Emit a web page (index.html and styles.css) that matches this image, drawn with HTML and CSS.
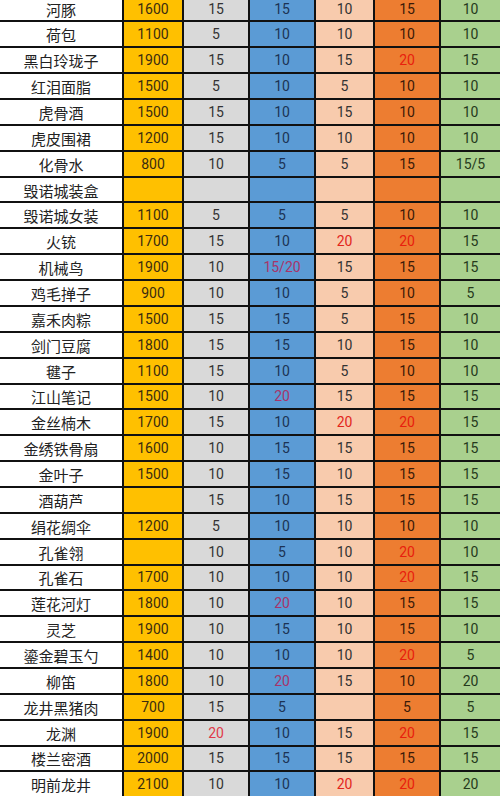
FILE: index.html
```html
<!DOCTYPE html>
<html lang="zh">
<head>
<meta charset="utf-8">
<link rel="stylesheet" href="styles.css">
</head>
<body>
<div class="sheet">
<div class="row"><div>河豚</div><div>1600</div><div>15</div><div>15</div><div>10</div><div>15</div><div>10</div></div>
<div class="row"><div>荷包</div><div>1100</div><div>5</div><div>10</div><div>10</div><div>10</div><div>10</div></div>
<div class="row"><div>黑白玲珑子</div><div>1900</div><div>15</div><div>10</div><div>15</div><div class="r">20</div><div>15</div></div>
<div class="row"><div>红泪面脂</div><div>1500</div><div>5</div><div>10</div><div>5</div><div>10</div><div>10</div></div>
<div class="row"><div>虎骨酒</div><div>1500</div><div>15</div><div>10</div><div>15</div><div>10</div><div>10</div></div>
<div class="row"><div>虎皮围裙</div><div>1200</div><div>15</div><div>10</div><div>10</div><div>10</div><div>10</div></div>
<div class="row"><div>化骨水</div><div>800</div><div>10</div><div>5</div><div>5</div><div>15</div><div>15/5</div></div>
<div class="row"><div>毁诺城装盒</div><div></div><div></div><div></div><div></div><div></div><div></div></div>
<div class="row"><div>毁诺城女装</div><div>1100</div><div>5</div><div>5</div><div>5</div><div>10</div><div>10</div></div>
<div class="row"><div>火铳</div><div>1700</div><div>15</div><div>10</div><div class="r">20</div><div class="r">20</div><div>15</div></div>
<div class="row"><div>机械鸟</div><div>1900</div><div>10</div><div class="r">15/20</div><div>15</div><div>15</div><div>15</div></div>
<div class="row"><div>鸡毛掸子</div><div>900</div><div>10</div><div>10</div><div>5</div><div>10</div><div>5</div></div>
<div class="row"><div>嘉禾肉粽</div><div>1500</div><div>15</div><div>15</div><div>5</div><div>15</div><div>10</div></div>
<div class="row"><div>剑门豆腐</div><div>1800</div><div>15</div><div>15</div><div>10</div><div>15</div><div>10</div></div>
<div class="row"><div>毽子</div><div>1100</div><div>15</div><div>10</div><div>5</div><div>10</div><div>10</div></div>
<div class="row"><div>江山笔记</div><div>1500</div><div>10</div><div class="r">20</div><div>15</div><div>15</div><div>15</div></div>
<div class="row"><div>金丝楠木</div><div>1700</div><div>15</div><div>10</div><div class="r">20</div><div class="r">20</div><div>15</div></div>
<div class="row"><div>金绣铁骨扇</div><div>1600</div><div>10</div><div>15</div><div>15</div><div>15</div><div>15</div></div>
<div class="row"><div>金叶子</div><div>1500</div><div>10</div><div>15</div><div>10</div><div>15</div><div>15</div></div>
<div class="row"><div>酒葫芦</div><div></div><div>15</div><div>10</div><div>15</div><div>15</div><div>15</div></div>
<div class="row"><div>绢花绸伞</div><div>1200</div><div>5</div><div>10</div><div>10</div><div>10</div><div>10</div></div>
<div class="row"><div>孔雀翎</div><div></div><div>10</div><div>5</div><div>10</div><div class="r">20</div><div>10</div></div>
<div class="row"><div>孔雀石</div><div>1700</div><div>10</div><div>10</div><div>10</div><div class="r">20</div><div>15</div></div>
<div class="row"><div>莲花河灯</div><div>1800</div><div>10</div><div class="r">20</div><div>10</div><div>15</div><div>15</div></div>
<div class="row"><div>灵芝</div><div>1900</div><div>10</div><div>15</div><div>10</div><div>15</div><div>10</div></div>
<div class="row"><div>鎏金碧玉勺</div><div>1400</div><div>10</div><div>10</div><div>10</div><div class="r">20</div><div>5</div></div>
<div class="row"><div>柳笛</div><div>1800</div><div>10</div><div class="r">20</div><div>15</div><div>10</div><div>20</div></div>
<div class="row"><div>龙井黑猪肉</div><div>700</div><div>15</div><div>5</div><div></div><div>5</div><div>5</div></div>
<div class="row"><div>龙渊</div><div>1900</div><div class="r">20</div><div>10</div><div>15</div><div class="r">20</div><div>15</div></div>
<div class="row"><div>楼兰密酒</div><div>2000</div><div>15</div><div>15</div><div>15</div><div>15</div><div>15</div></div>
<div class="row"><div>明前龙井</div><div>2100</div><div>10</div><div>10</div><div class="r">20</div><div class="r">20</div><div>20</div></div>
</div>
</body>
</html>
```
FILE: styles.css
```css
html, body {
  margin: 0;
  padding: 0;
  background: #ffffff;
  overflow: hidden;
}
.sheet {
  width: 500px;
  margin-top: -3.4px;
  display: flex;
  flex-direction: column;
  gap: 2px;
  background: #111;
}
.row {
  display: grid;
  grid-template-columns: 122px 58px 64px 64px 57px 64px 59px;
  column-gap: 2px;
  height: 23.87px;
}
.row > div {
  display: flex;
  align-items: center;
  justify-content: center;
  font-family: Roboto, "Noto Sans CJK SC", sans-serif;
  font-size: 14px;
  color: #2b2b2b;
  line-height: 1;
}
.row > div:nth-child(1) {
  background: #ffffff;
  font-family: "Noto Sans CJK SC", sans-serif;
  font-size: 15px;
  color: #222;
  padding-top: 1px;
}
.row > div:nth-child(2) { background: #ffc000; color: #3a2c10; }
.row > div:nth-child(3) { background: #d9d9d9; color: #333; }
.row > div:nth-child(4) { background: #5b9bd5; color: #1c3354; }
.row > div:nth-child(5) { background: #f8cbad; color: #333; }
.row > div:nth-child(6) { background: #ed7d31; color: #3a1a08; }
.row > div:nth-child(7) { background: #a9d08e; color: #263a1c; }
.row > div.r { color: #e2261c; }
.row > div:nth-child(3).r { color: #e03a4a; }
.row > div:nth-child(4).r { color: #a8346a; }
.row > div:nth-child(6).r { color: #e8200e; }
```
